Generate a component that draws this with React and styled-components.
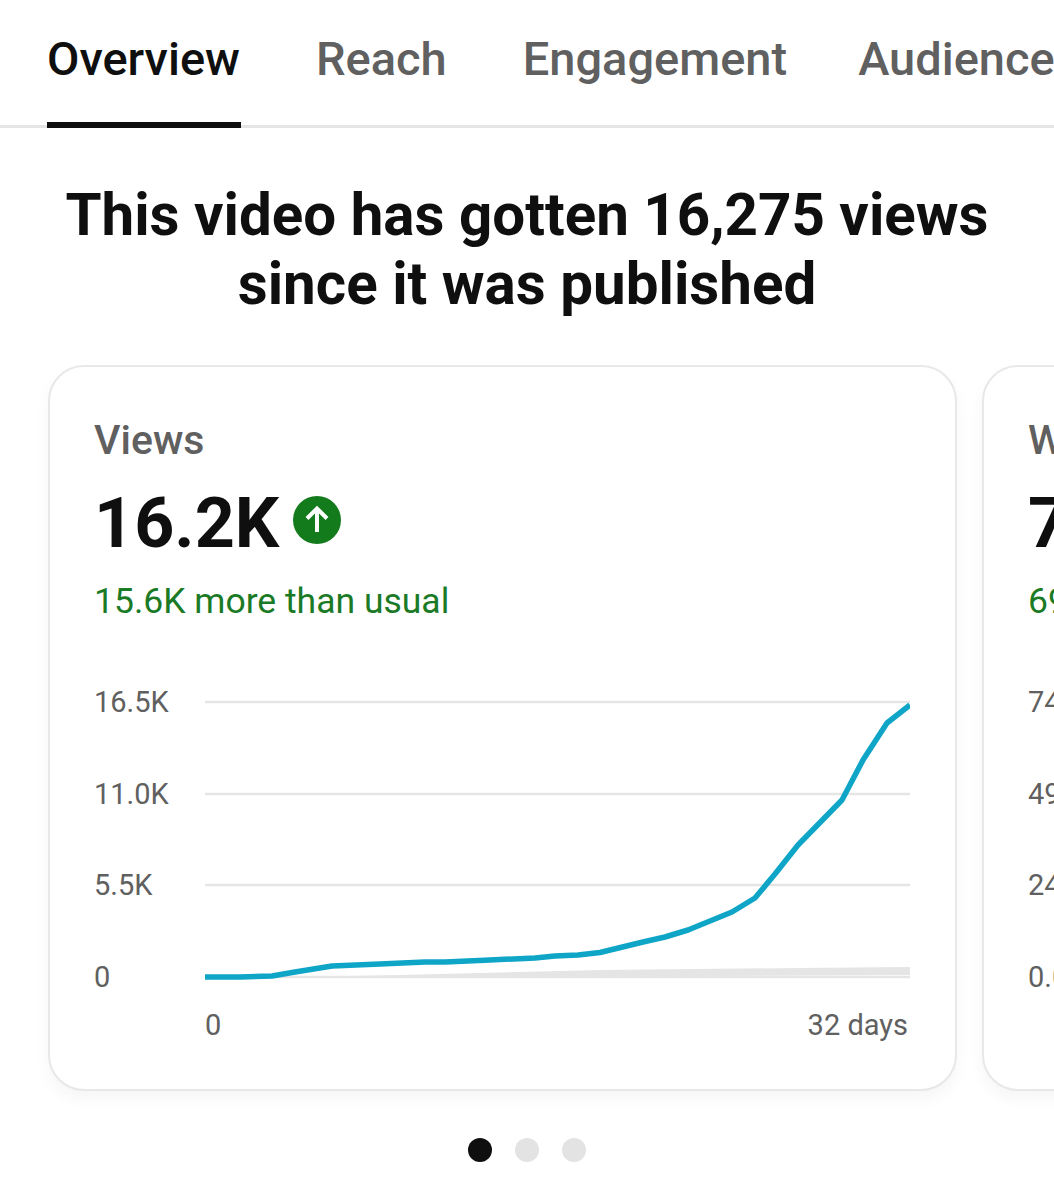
import React from "react";
import styled, { createGlobalStyle } from "styled-components";

const GlobalStyle = createGlobalStyle`
  html, body {
    margin: 0;
    padding: 0;
    background: #fff;
    font-family: Roboto, "Liberation Sans", sans-serif;
    overflow: hidden;
  }
`;

const Page = styled.div`
  width: 1054px;
  height: 1200px;
  overflow: hidden;
`;

const Tabs = styled.nav`
  display: flex;
  gap: 75px;
  height: 125px;
  padding-left: 47px;
  border-bottom: 3px solid #e5e5e5;
  white-space: nowrap;
`;

const Tab = styled.div`
  position: relative;
  height: 125px;
  padding-right: 1px;
  line-height: 118px;
  font-size: 47px;
  font-weight: 500;
  color: ${(props) => (props.active ? "#0f0f0f" : "#606060")};

  &:last-child {
    margin-left: -5px;
  }

  &::after {
    content: "";
    display: ${(props) => (props.active ? "block" : "none")};
    position: absolute;
    left: 0;
    right: 0;
    bottom: -3px;
    height: 6px;
    background: #0f0f0f;
  }
`;

const Heading = styled.h1`
  margin: 53px 0 0;
  font-size: 58.3px;
  line-height: 69px;
  font-weight: 700;
  text-align: center;
  color: #0f0f0f;
`;

const Carousel = styled.div`
  display: flex;
  gap: 25px;
  margin-top: 46px;
  padding: 0 0 30px 48px;
  overflow: hidden;
`;

const Card = styled.section`
  flex: none;
  box-sizing: border-box;
  width: 909px;
  height: 726px;
  padding: 49px 44px 0;
  background: #fff;
  border: 2px solid #e8e8e8;
  border-radius: 36px;
  box-shadow: 0 8px 16px rgba(0, 0, 0, 0.04);
`;

const Label = styled.div`
  font-size: 41px;
  line-height: 48px;
  font-weight: 500;
  color: #606060;
`;

const ValueRow = styled.div`
  display: flex;
  align-items: center;
  gap: 14px;
  margin-top: 19px;
  height: 80px;
`;

const Value = styled.div`
  font-size: 70px;
  line-height: 80px;
  font-weight: 700;
  color: #0f0f0f;
`;

const Badge = styled.svg`
  flex: none;
  width: 48px;
  height: 48px;
  margin-top: -6px;
`;

const Delta = styled.div`
  margin-top: 14px;
  font-size: 35.5px;
  line-height: 48px;
  color: #1a7a25;
  white-space: nowrap;
`;

const Chart = styled.div`
  display: flex;
  margin-top: 60px;
`;

const YAxis = styled.div`
  display: flex;
  flex-direction: column;
  gap: 57.6px;
  flex: none;
  width: 111px;
`;

const AxisText = styled.div`
  height: 34px;
  font-size: 29px;
  line-height: 34px;
  color: #606060;
`;

const XAxis = styled.div`
  display: flex;
  justify-content: space-between;
  margin: 13px 0 0 111px;
  width: 703px;
`;

const Dots = styled.div`
  display: flex;
  justify-content: center;
  gap: 23px;
  margin-top: 17px;
`;

const Dot = styled.span`
  width: 24px;
  height: 24px;
  border-radius: 50%;
  background: ${(props) => (props.active ? "#0f0f0f" : "#e3e3e3")};
`;

const TREND =
  "205,977 240,977 272,976 295,972 332,966 380,964 425,962 445,962 490,960 535,958 555,956 578,955 600,952.5 643,942 665,937 688,930 732,912 755,898 775,874 798,845 842,800 863,760 887,723 910,705";
const BAND = "300,977 400,975 600,970 800,968 910,967 910,975 600,976.5 300,977";
const GRID = [702, 794, 885, 977];

function UpBadge() {
  return (
    <Badge viewBox="0 0 48 48">
      <circle cx="24" cy="24" r="24" fill="#137b1c" />
      <path
        d="M24 36V13M14 22.5L24 12.5L34 22.5"
        fill="none"
        stroke="#fff"
        strokeWidth="4"
      />
    </Badge>
  );
}

function Plot() {
  return (
    <svg width="705" height="310" viewBox="205 685 705 310">
      {GRID.map((y) => (
        <line key={y} x1="205" x2="910" y1={y} y2={y} stroke="#e5e5e5" strokeWidth="2.5" />
      ))}
      <polygon points={BAND} fill="#e5e5e5" />
      <polyline
        points={TREND}
        fill="none"
        stroke="#0ea5c7"
        strokeWidth="5.5"
        strokeLinejoin="round"
      />
    </svg>
  );
}

function MetricCard({ label, value, delta, ticks, range }) {
  return (
    <Card>
      <Label>{label}</Label>
      <ValueRow>
        <Value>{value}</Value>
        <UpBadge />
      </ValueRow>
      <Delta>{delta}</Delta>
      <Chart>
        <YAxis>
          {ticks.map((tick) => (
            <AxisText key={tick}>{tick}</AxisText>
          ))}
        </YAxis>
        <Plot />
      </Chart>
      <XAxis>
        <AxisText>0</AxisText>
        <AxisText>{range}</AxisText>
      </XAxis>
    </Card>
  );
}

export default function App() {
  return (
    <Page>
      <GlobalStyle />
      <Tabs>
        <Tab active>Overview</Tab>
        <Tab>Reach</Tab>
        <Tab>Engagement</Tab>
        <Tab>Audience</Tab>
      </Tabs>
      <Heading>
        This video has gotten 16,275 views
        <br />
        since it was published
      </Heading>
      <Carousel>
        <MetricCard
          label="Views"
          value="16.2K"
          delta="15.6K more than usual"
          ticks={["16.5K", "11.0K", "5.5K", "0"]}
          range="32 days"
        />
        <MetricCard
          label="Watch time (hours)"
          value="725.4"
          delta="690.1 more than usual"
          ticks={["740", "490", "245", "0.0"]}
          range="32 days"
        />
      </Carousel>
      <Dots>
        <Dot active />
        <Dot />
        <Dot />
      </Dots>
    </Page>
  );
}
